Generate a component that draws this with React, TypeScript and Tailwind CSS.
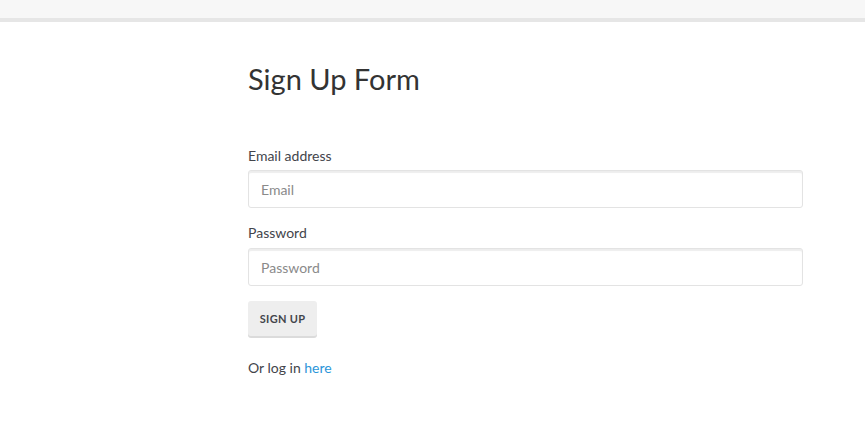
export default function App() {
  return (
    <div className="min-h-[425px] bg-white" style={{ fontFamily: '"Source Sans Pro", Lato, "Open Sans", sans-serif' }}>
      <div className="h-[18px] bg-[#f7f7f7] border-b-[4px] border-[#e6e6e6] box-content" />
      <div className="pl-[248px] w-[803px]">
        <h1 className="mt-[39px] text-[29px] leading-[35px] text-[#333] font-normal">Sign Up Form</h1>
        <form className="mt-[50px]">
          <label className="block text-[14px] leading-[20px] text-[#43454b]">Email address</label>
          <input
            type="email"
            placeholder="Email"
            className="mt-[4px] block w-full h-[38px] px-[12px] rounded-[3px] border border-[#e3e3e3] bg-white text-[14px] text-[#43454b] placeholder:text-[#8a8a8a] shadow-[inset_0_2px_1px_rgba(0,0,0,0.07)] outline-none"
          />
          <label className="mt-[15px] block text-[14px] leading-[20px] text-[#43454b]">Password</label>
          <input
            type="password"
            placeholder="Password"
            className="mt-[5px] block w-full h-[38px] px-[12px] rounded-[3px] border border-[#e3e3e3] bg-white text-[14px] text-[#43454b] placeholder:text-[#8a8a8a] shadow-[inset_0_2px_1px_rgba(0,0,0,0.07)] outline-none"
          />
          <button
            type="button"
            className="mt-[15px] block w-[69px] h-[37px] rounded-[3px] bg-[#eeeeee] text-[11px] font-bold tracking-[0.3px] text-[#43454b] shadow-[inset_0_-2px_0_rgba(0,0,0,0.08)]"
          >
            SIGN UP
          </button>
        </form>
        <p className="mt-[20px] text-[14px] leading-[20px] text-[#43454b]">
          Or log in <a className="text-[#2c96d9]">here</a>
        </p>
      </div>
    </div>
  );
}
